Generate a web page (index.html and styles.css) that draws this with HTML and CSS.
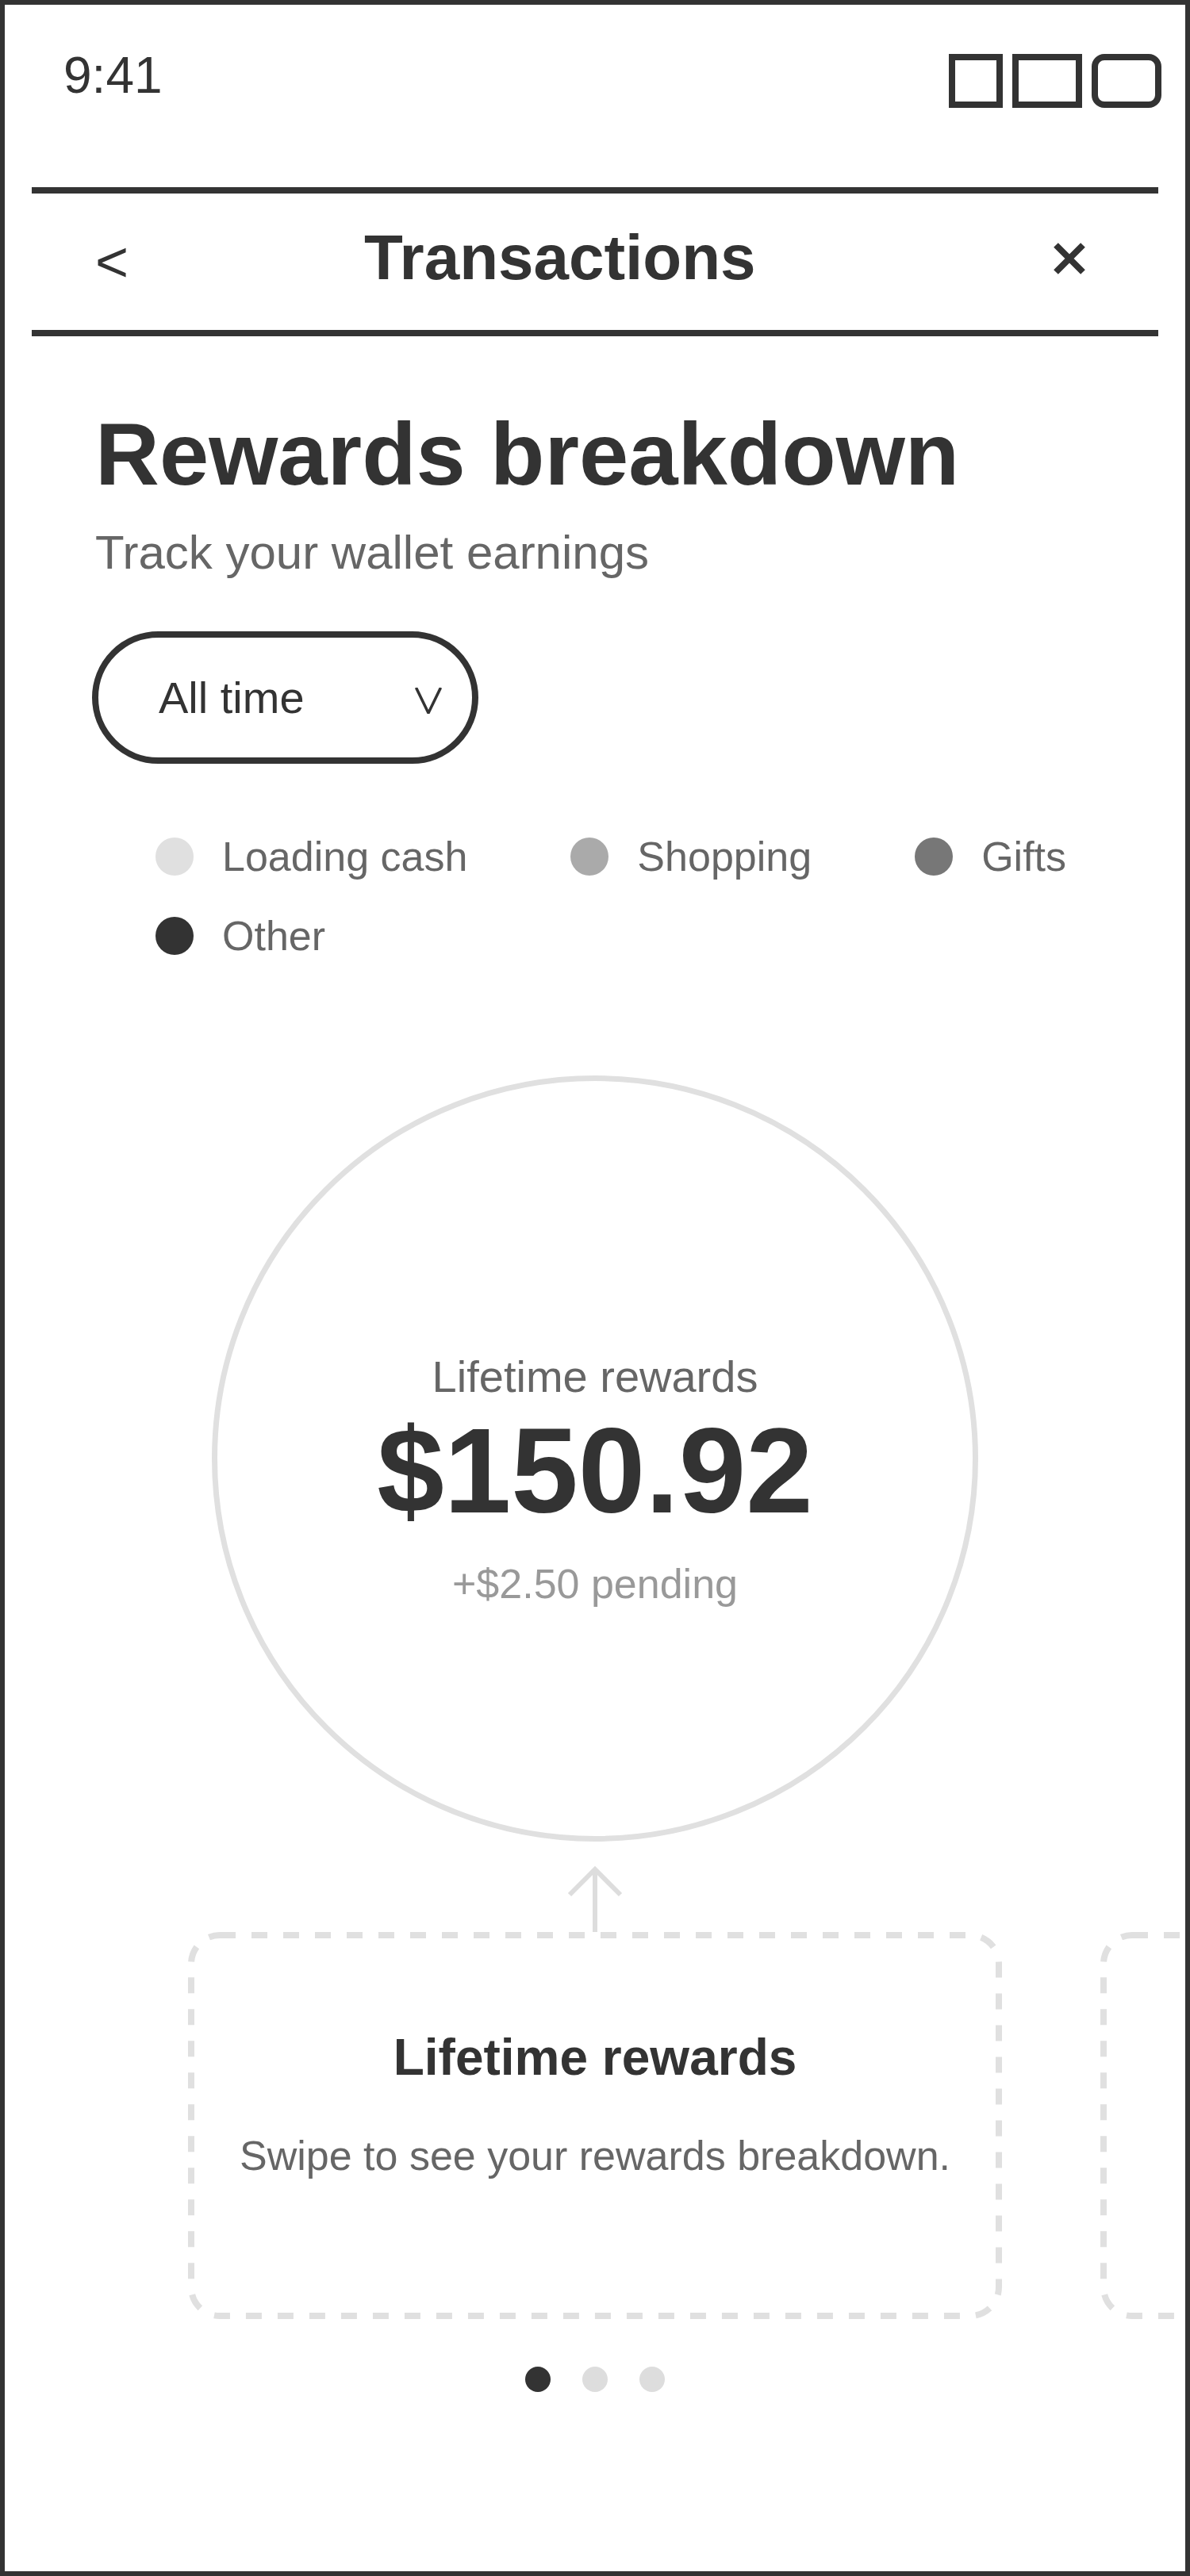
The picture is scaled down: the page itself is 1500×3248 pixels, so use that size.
FILE: index.html
```html
<!DOCTYPE html>
<html lang="en">
<head>
<meta charset="utf-8">
<title>Transactions - Rewards breakdown</title>
<link rel="stylesheet" href="styles.css">
</head>
<body>
<div class="phone">
  <div class="status">
    <span class="time">9:41</span>
    <div class="sys-icons">
      <span class="sys sys-a"></span>
      <span class="sys sys-b"></span>
      <span class="sys sys-c"></span>
    </div>
  </div>

  <header class="nav">
    <span class="back">&lt;</span>
    <span class="nav-title">Transactions</span>
    <svg class="close" width="40" height="40" viewBox="0 0 40 40" aria-hidden="true">
      <path d="M3 3 L37 37 M37 3 L3 37" stroke="#333" stroke-width="8" fill="none"/>
    </svg>
  </header>

  <main class="content">
    <h1 class="heading">Rewards breakdown</h1>
    <p class="subtitle">Track your wallet earnings</p>

    <div class="dropdown">
      <span class="dropdown-label">All time</span>
      <svg class="chev" width="34" height="33" viewBox="0 0 34 33" aria-hidden="true">
        <path d="M1.5 0 L17 32 L32.5 0" stroke="#333" stroke-width="3.5" fill="none"/>
      </svg>
    </div>

    <ul class="legend">
      <li class="legend-item"><span class="dot dot-1"></span>Loading cash</li>
      <li class="legend-item"><span class="dot dot-2"></span>Shopping</li>
      <li class="legend-item"><span class="dot dot-3"></span>Gifts</li>
      <li class="legend-item"><span class="dot dot-4"></span>Other</li>
    </ul>

    <div class="ring">
      <div class="ring-label">Lifetime rewards</div>
      <div class="ring-amount">$150.92</div>
      <div class="ring-pending">+$2.50 pending</div>
    </div>

    <svg class="pointer" width="70" height="83" viewBox="0 0 70 83" aria-hidden="true">
      <path d="M35 4 L35 83 M3 36 L35 4 L67 36" stroke="#ddd" stroke-width="6" fill="none"/>
    </svg>
  </main>

  <div class="carousel">
    <section class="card">
      <svg class="card-frame" width="1026" height="488" viewBox="0 0 1026 488" aria-hidden="true">
        <rect x="4" y="4" width="1018" height="480" rx="36" ry="36" fill="none" stroke="#e0e0e0" stroke-width="8" stroke-dasharray="20 20"/>
      </svg>
      <h2 class="card-title">Lifetime rewards</h2>
      <p class="card-text">Swipe to see your rewards breakdown.</p>
    </section>
    <section class="card">
      <svg class="card-frame" width="1026" height="488" viewBox="0 0 1026 488" aria-hidden="true">
        <rect x="4" y="4" width="1018" height="480" rx="36" ry="36" fill="none" stroke="#e0e0e0" stroke-width="8" stroke-dasharray="20 20"/>
      </svg>
    </section>
  </div>

  <div class="pager">
    <span class="pager-dot active"></span>
    <span class="pager-dot"></span>
    <span class="pager-dot"></span>
  </div>
</div>
</body>
</html>
```

FILE: styles.css
```css
html, body {
  margin: 0;
  padding: 0;
  background: #fff;
}

body {
  font-family: "Liberation Sans", Arial, sans-serif;
  color: #333;
}

.phone {
  width: 1500px;
  height: 3248px;
  box-sizing: border-box;
  border: 6px solid #333;
  overflow: hidden;
  background: #fff;
}

/* status bar */
.status {
  display: flex;
  justify-content: space-between;
  align-items: flex-start;
  height: 230px;
  box-sizing: border-box;
  padding: 57px 30px 0 74px;
}

.time {
  font-size: 64px;
  line-height: 64px;
  color: #333;
}

.sys-icons {
  display: flex;
  gap: 12px;
  margin-top: 5px;
}

.sys {
  display: block;
  height: 68px;
  box-sizing: border-box;
  border: 8px solid #333;
}

.sys-a { width: 68px; }
.sys-b { width: 88px; }
.sys-c { width: 88px; border-radius: 16px; }

/* nav bar */
.nav {
  display: flex;
  align-items: center;
  margin: 0 34px;
  height: 188px;
  box-sizing: border-box;
  border-top: 8px solid #333;
  border-bottom: 8px solid #333;
  padding: 0 92px 0 80px;
}

.back {
  font-size: 72px;
  line-height: 72px;
  color: #333;
}

.nav-title {
  margin-left: 297px;
  margin-bottom: 11px;
  font-size: 80px;
  line-height: 80px;
  font-weight: 700;
  color: #333;
}

.close {
  display: block;
  margin-left: auto;
  margin-bottom: 8px;
}

/* content */
.content {
  padding: 0 114px;
}

.heading {
  margin: 85px 0 0;
  font-size: 112px;
  line-height: 128px;
  font-weight: 700;
  color: #333;
}

.subtitle {
  margin: 24px 0 0;
  font-size: 60px;
  line-height: 72px;
  color: #666;
}

.dropdown {
  display: flex;
  align-items: center;
  width: 487px;
  height: 167px;
  box-sizing: border-box;
  margin: 63px 0 0 -4px;
  border: 8px solid #333;
  border-radius: 84px;
  padding: 0 38px 0 76px;
}

.dropdown-label {
  font-size: 56px;
  line-height: 56px;
  color: #333;
}

.chev {
  display: block;
  margin-left: auto;
  margin-top: 8px;
}

.legend {
  list-style: none;
  display: flex;
  flex-wrap: wrap;
  column-gap: 130px;
  row-gap: 40px;
  margin: 87px 0 0 76px;
  padding: 0;
}

.legend-item {
  display: flex;
  align-items: center;
  gap: 36px;
  height: 60px;
  font-size: 52px;
  line-height: 60px;
  color: #666;
}

.dot {
  display: block;
  width: 48px;
  height: 48px;
  border-radius: 50%;
}

.dot-1 { background: #e0e0e0; }
.dot-2 { background: #aaa; }
.dot-3 { background: #777; }
.dot-4 { background: #333; }

/* ring */
.ring {
  display: flex;
  flex-direction: column;
  align-items: center;
  width: 966px;
  height: 966px;
  box-sizing: border-box;
  margin: 146px auto 0;
  border: 7px solid #e0e0e0;
  border-radius: 50%;
  padding-top: 341px;
  text-align: center;
}

.ring-label {
  font-size: 56px;
  line-height: 64px;
  color: #666;
}

.ring-amount {
  margin-top: 10px;
  font-size: 152px;
  line-height: 152px;
  font-weight: 700;
  color: #333;
}

.ring-pending {
  margin-top: 37px;
  font-size: 52px;
  line-height: 60px;
  color: #999;
}

.pointer {
  display: block;
  margin: 31px auto 0;
}

/* carousel */
.carousel {
  display: flex;
  gap: 124px;
  padding-left: 231px;
  overflow: hidden;
}

.card {
  position: relative;
  flex: 0 0 1026px;
  height: 488px;
  box-sizing: border-box;
  padding-top: 120px;
  text-align: center;
}

.card-frame {
  position: absolute;
  top: 0;
  left: 0;
  display: block;
}

.card-title {
  position: relative;
  margin: 0;
  font-size: 64px;
  line-height: 76px;
  font-weight: 700;
  color: #333;
}

.card-text {
  position: relative;
  margin: 54px 0 0;
  font-size: 52px;
  line-height: 64px;
  color: #666;
}

/* pager */
.pager {
  display: flex;
  justify-content: center;
  gap: 40px;
  margin-top: 60px;
}

.pager-dot {
  display: block;
  width: 32px;
  height: 32px;
  border-radius: 50%;
  background: #ddd;
}

.pager-dot.active {
  background: #333;
}
```
